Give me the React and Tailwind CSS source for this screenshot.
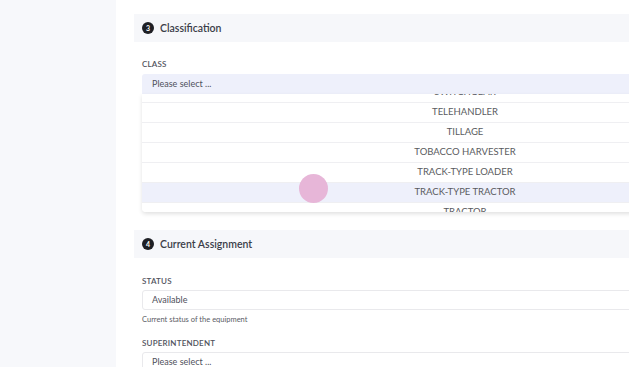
import React from "react";

const items = [
  "SWITCHGEAR",
  "TELEHANDLER",
  "TILLAGE",
  "TOBACCO HARVESTER",
  "TRACK-TYPE LOADER",
  "TRACK-TYPE TRACTOR",
  "TRACTOR",
  "TRAILER",
];

function Header({ n, title }) {
  return (
    <div className="h-[28px] bg-[#f6f7fa] flex items-center pl-2 gap-[6px]">
      <div className="w-[12px] h-[12px] rounded-full bg-[#1e1f24] text-white text-[7px] font-bold flex items-center justify-center leading-none">
        {n}
      </div>
      <div className="text-[10.5px] font-semibold text-[#3b3d48] leading-none">{title}</div>
    </div>
  );
}

function Label({ children, className = "" }) {
  return (
    <div className={"text-[8px] leading-[12px] uppercase font-semibold text-[#50525c] tracking-[0.2px] " + className}>
      {children}
    </div>
  );
}

export default function App() {
  return (
    <div
      className="flex w-[629px] h-[367px] overflow-hidden bg-white"
      style={{ fontFamily: "Lato, 'Open Sans', sans-serif" }}
    >
      <div className="w-[116px] shrink-0 bg-[#f7f8fb]" />
      <div className="w-[680px] shrink-0 pl-[18px] pt-[14px]">
        <Header n="3" title="Classification" />
        <div className="px-2">
          <Label className="mt-[16px]">Class</Label>
          <div className="relative mt-[4px] mb-[136px]">
            <div className="h-[20px] bg-[#eef0fb] rounded-t-[3px] pl-[10px] flex items-center text-[9px] text-[#4f515b]">
              Please select ...
            </div>
            <div className="absolute left-0 right-0 top-[20px] h-[118px] overflow-hidden bg-white rounded-b-[4px] shadow-[0_2px_4px_rgba(0,0,0,0.12)]">
              <div className="-mt-[12px]">
                {items.map((it) => (
                  <div
                    key={it}
                    className={
                      "h-[20px] border-t border-[#efeff2] flex items-center justify-center text-[9.5px] text-[#5a5b60] " +
                      (it === "TRACK-TYPE TRACTOR" ? "bg-[#eef0fb]" : "bg-white")
                    }
                  >
                    {it}
                  </div>
                ))}
              </div>
            </div>
            <div className="absolute left-[157px] top-[100px] w-[29px] h-[29px] rounded-full bg-[#e7b6d8]" />
          </div>
        </div>
        <Header n="4" title="Current Assignment" />
        <div className="px-2">
          <Label className="mt-[17px]">Status</Label>
          <div className="mt-[3px] h-[20px] border border-[#e9e9ec] rounded-[3px] pl-[9px] flex items-center text-[9px] text-[#4f515b]">
            Available
          </div>
          <div className="mt-[5px] text-[7.5px] leading-[10px] text-[#5a5c66]">
            Current status of the equipment
          </div>
          <Label className="mt-[12px]">Superintendent</Label>
          <div className="mt-[3px] h-[20px] border border-[#e9e9ec] rounded-[3px] pl-[9px] flex items-center text-[9px] text-[#4f515b]">
            Please select ...
          </div>
        </div>
      </div>
    </div>
  );
}
